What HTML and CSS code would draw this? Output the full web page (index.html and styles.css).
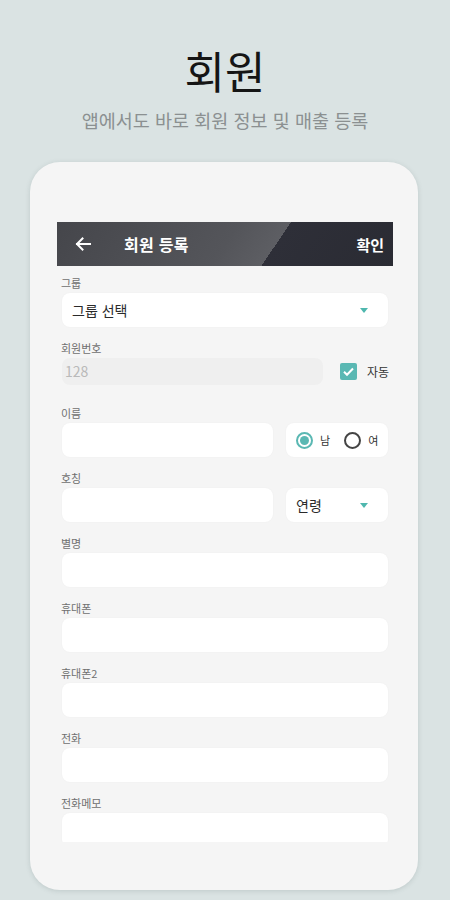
FILE: index.html
```html
<!DOCTYPE html>
<html lang="ko">
<head>
<meta charset="utf-8">
<link rel="stylesheet" href="styles.css">
</head>
<body>
<header class="hero">
  <h1 class="hero-title">회원</h1>
  <p class="hero-sub">앱에서도 바로 회원 정보 및 매출 등록</p>
</header>
<div class="phone">
  <div class="screen">
    <div class="appbar">
      <svg class="back" width="18" height="18" viewBox="0 0 18 18"><path d="M16 9H3M8.5 3.5L3 9l5.5 5.5" fill="none" stroke="#fff" stroke-width="2" stroke-linecap="square"/></svg>
      <span class="appbar-title">회원 등록</span>
      <span class="appbar-action">확인</span>
    </div>
    <div class="form">
      <div class="field">
        <div class="label">그룹</div>
        <div class="box select"><span class="select-text">그룹 선택</span><span class="caret"></span></div>
      </div>
      <div class="field">
        <div class="label">회원번호</div>
        <div class="row">
          <div class="box disabled">128</div>
          <div class="check-wrap"><span class="checkbox"><svg width="13" height="13" viewBox="0 0 13 13"><path d="M2 6.8l3 3L11 3.5" fill="none" stroke="#fff" stroke-width="2"/></svg></span><span class="check-label">자동</span></div>
        </div>
      </div>
      <div class="field spaced">
        <div class="label">이름</div>
        <div class="row">
          <div class="box grow"></div>
          <div class="box side radios">
            <span class="radio on"></span><span class="radio-label">남</span>
            <span class="radio"></span><span class="radio-label">여</span>
          </div>
        </div>
      </div>
      <div class="field">
        <div class="label">호칭</div>
        <div class="row">
          <div class="box grow"></div>
          <div class="box side select"><span class="select-text">연령</span><span class="caret"></span></div>
        </div>
      </div>
      <div class="field">
        <div class="label">별명</div>
        <div class="box"></div>
      </div>
      <div class="field">
        <div class="label">휴대폰</div>
        <div class="box"></div>
      </div>
      <div class="field">
        <div class="label">휴대폰2</div>
        <div class="box"></div>
      </div>
      <div class="field">
        <div class="label">전화</div>
        <div class="box"></div>
      </div>
      <div class="field">
        <div class="label">전화메모</div>
        <div class="box"></div>
      </div>
    </div>
  </div>
</div>
</body>
</html>
```

FILE: styles.css
```css
* { box-sizing: border-box; }
html, body { margin: 0; padding: 0; }
body {
  width: 450px;
  height: 900px;
  overflow: hidden;
  background: #dae3e3;
  font-family: "Noto Sans CJK KR", "Noto Sans", sans-serif;
}
.hero { text-align: center; padding-top: 40px; }
.hero-title {
  margin: 0;
  font-size: 44px;
  line-height: 60px;
  font-weight: 400;
  color: #151515;
}
.hero-sub {
  margin: 8px 0 0;
  font-size: 18.5px;
  line-height: 24px;
  color: #8b9091;
}
.phone {
  margin: 30px 0 0 30px;
  width: 388px;
  height: 728px;
  border-radius: 30px;
  background: #f5f5f5;
  box-shadow: 0 1px 5px rgba(80, 100, 100, 0.2);
  padding: 60px 25px 0 27px;
}
.screen {
  height: 620px;
  overflow: hidden;
}
.appbar {
  height: 44px;
  display: flex;
  align-items: center;
  padding: 0 9px 0 17px;
  background: linear-gradient(124deg, #45464b 0%, #54555a 50%, #5d5e63 64%, #2e2f38 64%, #2a2b33 100%);
  color: #fff;
}
.back { flex: none; }
.appbar-title {
  margin-left: 32px;
  font-size: 16px;
  font-weight: 700;
  letter-spacing: 0.3px;
}
.appbar-action {
  margin-left: auto;
  font-size: 15px;
  font-weight: 700;
}
.form {
  padding: 9px 5px 0 5px;
  display: flex;
  flex-direction: column;
  gap: 13px;
}
.field.spaced { margin-top: 7px; }
.label {
  height: 16px;
  line-height: 16px;
  font-size: 11px;
  color: #707070;
  margin: 0 0 2px -1px;
}
.box {
  height: 34px;
  background: #fff;
  border-radius: 8px;
  box-shadow: 0 0 2px rgba(0, 0, 0, 0.04);
}
.row { display: flex; align-items: center; gap: 13px; }
.grow { flex: 1; }
.side { width: 102px; flex: none; }
.select {
  display: flex;
  align-items: center;
  padding: 0 20px 0 10px;
}
.select-text { font-size: 14px; color: #2a2a2a; }
.caret {
  margin-left: auto;
  width: 0; height: 0;
  border-left: 4px solid transparent;
  border-right: 4px solid transparent;
  border-top: 5px solid #4fb7ae;
}
.disabled {
  width: 261px;
  height: 27px;
  flex: none;
  background: #efefef;
  box-shadow: none;
  font-size: 14px;
  line-height: 27px;
  color: #b9b9b9;
  padding-left: 3px;
}
.check-wrap {
  display: flex;
  align-items: center;
  flex: none;
  white-space: nowrap;
  margin-left: 4px;
}
.checkbox {
  width: 17px; height: 17px;
  border-radius: 2px;
  background: #5ab8b3;
  display: flex; align-items: center; justify-content: center;
}
.check-label { margin-left: 10px; font-size: 12px; color: #333; }
.radios { display: flex; align-items: center; padding-left: 10px; }
.radio {
  flex: none;
  width: 17px; height: 17px;
  border-radius: 50%;
  border: 2px solid #444;
  display: flex; align-items: center; justify-content: center;
}
.radio.on { border-color: #5ab8b3; }
.radio.on::after {
  content: "";
  width: 9px; height: 9px;
  border-radius: 50%;
  background: #5ab8b3;
}
.radio-label { font-size: 11px; color: #333; margin: 0 14px 0 7px; }
.radio-label:last-child { margin-right: 0; }
```
